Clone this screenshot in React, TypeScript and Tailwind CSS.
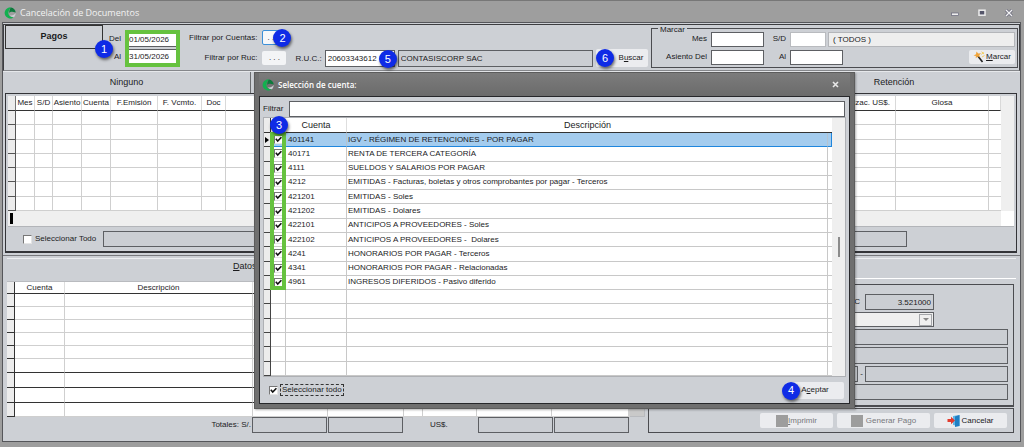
import React, { useState } from 'react'

const accounts = [
    { code: '401141', name: 'IGV - RÉGIMEN DE RETENCIONES - POR PAGAR' },
    { code: '40171', name: 'RENTA DE TERCERA CATEGORÍA' },
    { code: '4111', name: 'SUELDOS Y SALARIOS POR PAGAR' },
    { code: '4212', name: 'EMITIDAS - Facturas, boletas y otros comprobantes por pagar - Terceros' },
    { code: '421201', name: 'EMITIDAS - Soles' },
    { code: '421202', name: 'EMITIDAS - Dolares' },
    { code: '422101', name: 'ANTICIPOS A PROVEEDORES - Soles' },
    { code: '422102', name: 'ANTICIPOS A PROVEEDORES -  Dolares' },
    { code: '4241', name: 'HONORARIOS POR PAGAR - Terceros' },
    { code: '4341', name: 'HONORARIOS POR PAGAR - Relacionadas' },
    { code: '4961', name: 'INGRESOS DIFERIDOS - Pasivo diferido' },
]

const blankAccountRows = [0, 1, 2, 3, 4, 5]
const documentRows = [0, 1, 2, 3, 4, 5, 6]

const documentColumns = [
    { label: '', width: 'w-[8px]' },
    { label: 'Mes', width: 'w-[19px]' },
    { label: 'S/D', width: 'w-[18px]' },
    { label: 'Asiento', width: 'w-[29px]' },
    { label: 'Cuenta', width: 'w-[29px]' },
    { label: 'F.Emisión', width: 'w-[47px]' },
    { label: 'F. Vcmto.', width: 'w-[44px]' },
    { label: 'Doc', width: 'w-[24px]' },
    { label: '', width: '' },
    { label: 'Cotizac. US$.', width: 'w-[60px]' },
    { label: 'Glosa', width: 'w-[93px]' },
    { label: '', width: 'w-[12px]' },
]

const entryColumns = ['w-[8px]', 'w-[50px]', 'w-[188px]', 'w-[75px]', 'w-[76px]', 'w-[19px]', 'w-[54px]', 'w-[75px]', 'w-[77px]', '']

const entryRows = [
    { height: 'h-[13px]', heavy: false },
    { height: 'h-[13px]', heavy: false },
    { height: 'h-[13px]', heavy: false },
    { height: 'h-[13px]', heavy: false },
    { height: 'h-[13px]', heavy: false },
    { height: 'h-[14px]', heavy: true },
    { height: 'h-[15px]', heavy: true },
    { height: 'h-[15px]', heavy: true },
    { height: 'h-[14px]', heavy: false },
]

const fieldBox = 'border border-[#5d5f63] bg-[#cbced3] outline-none'
const whiteBox = 'border border-[#5d5f63] bg-white outline-none'
const flatButton = 'flex items-center justify-center rounded-[2px] bg-[#ebecef]'

const Logo = () => (
    <svg className="size-[12px] shrink-0" viewBox="0 0 12 12">
        <path d="M7 0.4A5.6 5.6 0 1 0 9.8 10.3C7 10.6 4.6 9 4.4 6.6C4.2 4 5.6 1.5 7 0.4Z" fill="#12b04f" />
        <path d="M7 0.4C9.6 0.7 11.6 2.9 11.7 5.5L8.3 4.8C7.3 4.5 6 5 5.4 5.9C5 3.6 5.8 1.5 7 0.4Z" fill="#0d7a3c" />
        <path d="M11.7 6C11.6 7.8 11 9.2 9.8 10.3C7.9 10.3 6.7 9.5 6 8.3C8.4 8.8 10.3 7.8 11.7 6Z" fill="#c9ced2" />
    </svg>
)

const Badge = ({ value, place }: { value: number; place: string }) => (
    <span className={`absolute z-10 flex size-[18px] items-center justify-center rounded-full bg-[#0f2be6] text-[11px] leading-none text-white shadow-[1px_2px_3px_rgba(0,0,0,0.55)] ${place}`}>
        {value}
    </span>
)

const Check = ({ label, checked, onChange }: { label: string; checked: boolean; onChange: () => void }) => (
    <span className="relative block size-[9px] shrink-0">
        <input
            type="checkbox"
            aria-label={label}
            checked={checked}
            onChange={onChange}
            className="block size-[9px] appearance-none border border-r-[#e4e4e4] border-b-[#e4e4e4] border-t-[#777] border-l-[#777] bg-white"
        />
        {checked && (
            <svg className="pointer-events-none absolute inset-0 size-[9px]" viewBox="0 0 9 9">
                <path d="M1.8 3.8L3.7 6L7.4 2.2" fill="none" stroke="#111" strokeWidth="1.6" />
            </svg>
        )}
    </span>
)

const FilterPanel = () => (
    <div className="flex h-[47px] border border-b-[#85878b] border-[#3c3d40] px-px">
        <div className="flex h-[24px] w-[98px] shrink-0 items-center justify-center border border-[#333] text-[9px] font-bold">Pagos</div>

        <div className="relative flex shrink-0 items-center gap-[4px] pt-px text-[8px]">
            <Badge value={1} place="left-[-8px] top-[15px]" />
            <div className="flex w-[18px] flex-col gap-[6px] text-right leading-[12px]">
                <label htmlFor="del">Del</label>
                <label htmlFor="al">Al</label>
            </div>
            <div className="flex flex-col gap-[2px] border-4 border-[#66c23f]">
                <input id="del" defaultValue="01/05/2026" className="h-[13px] w-[47px] border-b border-[#5d5f63] bg-white outline-none" />
                <input id="al" defaultValue="31/05/2026" className="h-[14px] w-[47px] border-t border-[#5d5f63] bg-white outline-none" />
            </div>
        </div>

        <div className="ml-[9px] flex shrink-0 flex-col justify-center gap-[6px] text-[8px]">
            <div className="relative flex items-center justify-end gap-[5px]">
                <span>Filtrar por Cuentas:</span>
                <button aria-label="Filtrar por Cuentas" className="flex h-[15px] w-[24px] items-center rounded-[2px] border border-[#3b8fd8] bg-[#f6f7f9] pl-[4px]">. . .</button>
                <Badge value={2} place="right-[-5px] top-[-1px]" />
            </div>
            <div className="flex items-center justify-end gap-[5px]">
                <span>Filtrar por Ruc:</span>
                <button aria-label="Filtrar por Ruc" className="flex h-[14px] w-[24px] items-center justify-center rounded-[2px] bg-[#f3f4f6]">. . .</button>
            </div>
        </div>

        <div className="ml-[9px] flex min-w-0 flex-1 items-end gap-[3px] pb-[3px] text-[8px]">
            <label htmlFor="ruc" className="leading-[16px]">R.U.C.:</label>
            <div className="relative shrink-0">
                <input id="ruc" defaultValue="20603343612" className={`block h-[17px] w-[70px] px-[2px] ${whiteBox}`} />
                <Badge value={5} place="right-[-2px] top-[0px]" />
            </div>
            <input aria-label="Razón social" readOnly value="CONTASISCORP SAC" className={`h-[17px] min-w-0 flex-1 px-[2px] ${fieldBox}`} />
            <button className={`relative h-[18px] w-[52px] shrink-0 pl-[18px] ${flatButton}`}>
                <Badge value={6} place="left-[0px] top-[0px]" />
                <span>B<u>u</u>scar</span>
            </button>
        </div>

        <fieldset className="relative mt-[3px] ml-[3px] flex h-[40px] w-[367px] shrink-0 flex-col justify-center gap-[3px] border border-[#4b4c50] pr-[2px] text-[8px]">
            <legend className="absolute top-[-4px] left-[6px] bg-[#cdd0d5] px-[2px] leading-[10px]">Marcar</legend>
            <div className="flex items-center">
                <label htmlFor="mes" className="w-[59px] pr-[4px] text-right">Mes</label>
                <input id="mes" className={`h-[15px] w-[53px] ${whiteBox}`} />
                <label htmlFor="sd" className="w-[26px] pr-[4px] text-right">S/D</label>
                <input id="sd" className="h-[15px] w-[36px] border border-[#b9bbbf] bg-white outline-none" />
                <input aria-label="Subdiario" readOnly value="( TODOS )" className="ml-[2px] h-[15px] min-w-0 flex-1 border border-[#b4b6ba] bg-[#eeeeee] px-[4px] outline-none" />
            </div>
            <div className="flex items-center">
                <label htmlFor="asiento" className="w-[59px] pr-[4px] text-right whitespace-nowrap">Asiento Del</label>
                <input id="asiento" className={`h-[15px] w-[53px] ${whiteBox}`} />
                <label htmlFor="asientoAl" className="w-[26px] pr-[4px] text-right">Al</label>
                <input id="asientoAl" className={`h-[15px] w-[53px] ${whiteBox}`} />
                <button className={`ml-auto h-[14px] w-[46px] gap-px ${flatButton}`}>
                    <svg className="size-[12px]" viewBox="0 0 12 12">
                        <path d="M4.5 4.5L9.5 11" stroke="#222" strokeWidth="1.6" />
                        <path d="M0.5 4.5L3 3.2L3.5 0.5L5.2 2.6L8 2.2L6.2 4.3L7.3 6.5L4.8 5.6L2.7 7.2L2.9 4.9Z" fill="#f0a43a" />
                        <path d="M8.5 0.8L11 3M9 6L11.5 4.5M8.5 3.5L10.5 1" stroke="#f3c94f" strokeWidth="0.9" />
                    </svg>
                    <span><u>M</u>arcar</span>
                </button>
            </div>
        </fieldset>
    </div>
)

const DocumentsPane = () => {
    const [allSelected, setAllSelected] = useState(false)

    return (
        <section>
            <div className="flex h-[22px] justify-between border-t border-[#e6e8eb] text-[9px]">
                <button className="w-[248px] border-r border-[#6b6d70]">Ninguno</button>
                <button className="w-[252px]">Retención</button>
            </div>
            <div className="mr-[3px] ml-[2px] border border-b-2 border-[#333438]">
                <div className="mt-[2px] mr-[2px] ml-[2px] border-b border-[#b3b5b9] bg-white">
                    <div className="flex">
                        <table className="h-[115px] min-w-0 flex-1 table-fixed border-separate border-spacing-0 text-[8px] leading-[10px]">
                            <thead>
                                <tr>
                                    {documentColumns.map((column, index) => (
                                        <th
                                            key={index}
                                            className={`h-[15px] overflow-hidden border-b border-b-[#333] p-0 font-normal whitespace-nowrap ${column.width} ${index === 0 ? 'border-r border-r-[#777] bg-[#ececec]' : 'border-r border-r-[#d9d9d9]'}`}
                                        >
                                            {column.label}
                                        </th>
                                    ))}
                                </tr>
                            </thead>
                            <tbody>
                                {documentRows.map((row) => (
                                    <tr key={row}>
                                        {documentColumns.map((_, index) => (
                                            <td
                                                key={index}
                                                className={`border-b p-0 ${index === 0 ? 'border-r border-[#555] bg-[#ececec]' : index === 11 ? 'border-[#cfcfcf]' : 'border-r border-[#cfcfcf]'}`}
                                            />
                                        ))}
                                    </tr>
                                ))}
                            </tbody>
                        </table>
                        <div className="w-[13px] bg-[#efefef]" />
                    </div>
                    <div className="mr-[13px] h-[15px] bg-[#efefef] py-[2px] pl-[2px]">
                        <div className="h-[11px] w-[3px] bg-black" />
                    </div>
                </div>
                <div className="flex h-[24px] items-center text-[8px]">
                    <label className="ml-[17px] flex items-center gap-[3px] whitespace-nowrap">
                        <Check label="Seleccionar Todo" checked={allSelected} onChange={() => setAllSelected(!allSelected)} />
                        Seleccionar Todo
                    </label>
                    <input aria-label="Documento" readOnly className={`mr-[109px] ml-[7px] h-[16px] min-w-0 flex-1 ${fieldBox}`} />
                </div>
            </div>
        </section>
    )
}

const EntriesTable = () => (
    <div className="min-w-0 flex-1">
        <div className="flex border-t border-r border-[#b9bbbf] bg-white">
            <table className="min-w-0 flex-1 table-fixed border-separate border-spacing-0 text-[8px] leading-[10px]">
                <thead>
                    <tr>
                        {entryColumns.map((width, index) => (
                            <th key={index} className={`h-[12px] border-r border-b border-b-[#333] p-0 font-normal ${width} ${index === 0 ? 'border-r-[#333] bg-[#ececec]' : 'border-r-[#dedede]'}`}>
                                {index === 1 ? 'Cuenta' : index === 2 ? 'Descripción' : ''}
                            </th>
                        ))}
                    </tr>
                </thead>
                <tbody>
                    {entryRows.map((entry, row) => (
                        <tr key={row}>
                            {entryColumns.map((_, index) => (
                                <td
                                    key={index}
                                    className={`p-0 ${entry.height} border-r border-b ${index === 0 ? 'border-[#333] bg-[#ececec]' : entry.heavy ? 'border-r-[#cfcfcf] border-b-[#333]' : 'border-[#cfcfcf]'}`}
                                />
                            ))}
                        </tr>
                    ))}
                </tbody>
            </table>
            <div className="w-[14px] border-b border-[#b9bbbf] bg-[#c9c9c9]" />
        </div>
        <div className="flex items-center text-[8px]">
            <span className="w-[245px] pr-[1px] text-right">Totales: S/.</span>
            <input aria-label="Total cargo S/." readOnly className={`h-[16px] w-[75px] ${fieldBox}`} />
            <input aria-label="Total abono S/." readOnly className={`ml-px h-[16px] w-[75px] ${fieldBox}`} />
            <span className="w-[75px] pl-[27px]">US$.</span>
            <input aria-label="Total cargo US$." readOnly className={`h-[16px] w-[75px] ${fieldBox}`} />
            <input aria-label="Total abono US$." readOnly className={`ml-px h-[16px] w-[75px] ${fieldBox}`} />
        </div>
    </div>
)

const PaymentPanel = () => (
    <div className="w-[366px] shrink-0 pt-[3px] text-[8px]">
        <div className="flex h-[123px] flex-col gap-[2px] border border-b-2 border-[#4b4c50] pt-[9px] pr-[5px] pl-[100px]">
            <div className="flex items-center justify-end gap-[5px] pr-[74px]">
                <label htmlFor="tc">TC</label>
                <input id="tc" readOnly value="3.521000" className={`h-[16px] w-[69px] px-[2px] text-right ${fieldBox}`} />
            </div>
            <div className="mr-[74px] flex h-[15px] shrink-0 items-center justify-end border border-[#5d5f63] bg-[#efefef] pr-px">
                <button aria-label="Abrir lista" className="flex h-[12px] w-[13px] items-center justify-center border border-[#a4a6aa]">
                    <svg className="h-[3px] w-[6px]" viewBox="0 0 6 3"><path d="M0 0H6L3 3Z" fill="#888" /></svg>
                </button>
            </div>
            <input aria-label="Banco" readOnly className={`h-[16px] w-full ${fieldBox}`} />
            <input aria-label="Cuenta bancaria" readOnly className={`h-[17px] w-full ${fieldBox}`} />
            <div className="flex items-center">
                <input aria-label="Serie" readOnly className={`h-[16px] min-w-0 flex-1 ${fieldBox}`} />
                <span className="w-[7px] text-center">-</span>
                <input aria-label="Número" readOnly className={`h-[16px] w-[143px] ${fieldBox}`} />
            </div>
            <input aria-label="Glosa" readOnly className={`h-[16px] w-full ${fieldBox}`} />
        </div>
        <div className="mt-px flex h-[25px] items-center justify-end gap-[4px] border border-[#4b4c50] pr-[6px]">
            <button disabled className={`h-[15px] w-[73px] text-[#77787c] ${flatButton}`}>
                <i className="size-[12px] bg-[#9d9d9d]" />
                <span><u>I</u>mprimir</span>
            </button>
            <button disabled className={`h-[15px] w-[93px] gap-[3px] text-[#77787c] ${flatButton}`}>
                <i className="size-[12px] bg-[#9d9d9d]" />
                <span>Generar Pago</span>
            </button>
            <button className={`h-[15px] w-[73px] gap-px ${flatButton}`}>
                <svg className="size-[13px]" viewBox="0 0 13 13">
                    <path d="M6 2L12.5 1V12L6 11Z" fill="#5fb4e6" />
                    <path d="M8 2.5L12.5 1V12L8 13Z" fill="#1f7fc4" />
                    <path d="M0.5 5H4V2.8L8 6.5L4 10.2V8H0.5Z" fill="#e23b2e" />
                </svg>
                <span>Cancelar</span>
            </button>
        </div>
    </div>
)

const AccountDialog = () => {
    const [selectedCodes, setSelectedCodes] = useState<string[]>(accounts.map(a => a.code))

    const toggleCode = (code: string) => {
        setSelectedCodes(prev => prev.includes(code) ? prev.filter(c => c !== code) : [...prev, code])
    }

    const toggleAll = () => {
        setSelectedCodes(selectedCodes.length === accounts.length ? [] : accounts.map(a => a.code))
    }

    return (
        <div role="dialog" aria-label="Selección de cuenta" className="absolute top-[71px] right-[169px] left-[254px] z-20 border border-[#5c5c5c] bg-[#6f6f6f] px-[4px] pb-[4px] shadow-[1px_1px_2px_rgba(0,0,0,0.3)]">
            <div className="flex h-[23px] items-center gap-[4px] bg-linear-to-b from-[#7c7c7c] to-[#6b6b6b] pl-[3px]">
                <Logo />
                <h2 className="flex-1 font-['Open_Sans',sans-serif] text-[8px] font-semibold text-white">Selección de cuenta:</h2>
                <button aria-label="Cerrar" className="mr-[11px]">
                    <svg className="size-[7px]" viewBox="0 0 7 7"><path d="M1 1L6 6M6 1L1 6" stroke="#e8e8e8" strokeWidth="1.6" /></svg>
                </button>
            </div>

            <div className="border border-[#26272a] bg-[#cdd0d5] pt-[4px] pr-[3px] pl-[3px]">
                <div className="flex items-center gap-[4px] pr-px text-[8px]">
                    <label htmlFor="filtrar" className="w-[22px]">Filtrar</label>
                    <input id="filtrar" className={`h-[16px] min-w-0 flex-1 px-[2px] ${whiteBox}`} />
                </div>

                <div className="relative flex border border-[#aeb0b4] bg-white">
                    <Badge value={3} place="left-[6px] top-[-2px]" />
                    <div className="pointer-events-none absolute top-[14px] left-[6px] z-5 h-[158px] w-[16px] border-4 border-[#66c23f]" />
                    <table className="h-[258px] min-w-0 flex-1 table-fixed border-separate border-spacing-0 text-[8px] leading-[10px]">
                        <thead>
                            <tr className="text-[9px]">
                                <th className="h-[15px] w-[7px] border-r border-b border-[#333] bg-[#ececec] p-0" />
                                <th className="w-[15px] border-b border-[#333] p-0" />
                                <th className="w-[61px] border-r border-b border-r-[#dedede] border-b-[#333] p-0 font-normal">Cuenta</th>
                                <th className="border-b border-[#333] p-0 font-normal">Descripción</th>
                                <th className="w-[4px] border-b border-[#333] p-0" />
                            </tr>
                        </thead>
                        <tbody>
                            {accounts.map((account, index) => (
                                <tr key={account.code} className={index === 0 ? 'bg-[#a4ccee]' : ''}>
                                    <td className="h-[14px] border-r border-b border-[#444] bg-[#ececec] p-0">
                                        {index === 0 && <svg className="h-[6px] w-[5px]" viewBox="0 0 5 6"><path d="M1 0L5 3L1 6Z" fill="#000" /></svg>}
                                    </td>
                                    <td className={`border-r border-b p-0 ${index === 0 ? 'border-b-[#1f86dd] border-r-[#b4c4d2]' : 'border-[#c8c8c8]'}`}>
                                        <div className="flex justify-center">
                                            <Check label={account.code} checked={selectedCodes.includes(account.code)} onChange={() => toggleCode(account.code)} />
                                        </div>
                                    </td>
                                    <td className={`border-r border-b p-0 pl-[2px] ${index === 0 ? 'border-b-[#1f86dd] border-r-[#b4c4d2]' : 'border-[#c8c8c8]'}`}>{account.code}</td>
                                    <td className={`border-r border-b p-0 pl-px whitespace-pre ${index === 0 ? 'border-b-[#1f86dd] border-r-[#b4c4d2]' : 'border-[#c8c8c8]'}`}>{account.name}</td>
                                    <td className={`border-b p-0 ${index === 0 ? 'border-r border-[#1f86dd]' : 'border-[#c8c8c8]'}`} />
                                </tr>
                            ))}
                            {blankAccountRows.map((row) => (
                                <tr key={row}>
                                    <td className="h-[14px] border-r border-b border-[#444] bg-[#ececec] p-0" />
                                    <td className="border-r border-b border-[#c8c8c8] p-0" />
                                    <td className="border-r border-b border-[#c8c8c8] p-0" />
                                    <td className="border-r border-b border-[#c8c8c8] p-0" />
                                    <td className="border-b border-[#c8c8c8] p-0" />
                                </tr>
                            ))}
                        </tbody>
                    </table>
                    <div className="flex w-[13px] justify-center bg-[#efefef] pt-[119px]">
                        <div className="h-[20px] w-[2px] bg-[#8c8c8c]" />
                    </div>
                </div>

                <div className="flex h-[26px] items-center justify-between text-[8px]">
                    <label className="ml-[6px] flex items-center gap-[2px]">
                        <Check label="Seleccionar todo" checked={selectedCodes.length === accounts.length} onChange={toggleAll} />
                        <span className="border border-dashed border-[#333] px-px leading-[10px]">Seleccionar todo</span>
                    </label>
                    <button className={`relative mr-[2px] h-[17px] w-[58px] ${flatButton}`}>
                        <Badge value={4} place="left-[-4px] top-0" />
                        <span>A<u>c</u>eptar</span>
                    </button>
                </div>
            </div>
        </div>
    )
}

const App = () => {
    return (
        <div className="relative flex min-h-screen flex-col overflow-hidden border-t border-[#777] bg-[#9e9e9e] font-['Liberation_Sans',Arial,sans-serif] text-[#1b1b1d]">
            <header className="flex h-[21px] items-center gap-[4px] pt-[3px] pl-[4px]">
                <Logo />
                <h1 className="flex-1 font-['Open_Sans',sans-serif] text-[9px] text-[#f2f2f2]">Cancelación de Documentos</h1>
                <div className="mr-[11px] flex items-center gap-[19px]">
                    <button aria-label="Minimizar">
                        <svg className="size-[8px]" viewBox="0 0 8 8"><rect x="0.5" y="4" width="7" height="2.5" fill="#eee" stroke="#66667a" strokeWidth="0.7" /></svg>
                    </button>
                    <button aria-label="Maximizar">
                        <svg className="size-[8px]" viewBox="0 0 8 8"><rect x="1" y="1.2" width="6" height="5" fill="#55566a" stroke="#eee" strokeWidth="1.5" /></svg>
                    </button>
                    <button aria-label="Cerrar ventana">
                        <svg className="size-[8px]" viewBox="0 0 8 8">
                            <path d="M1 1L7 7M7 1L1 7" stroke="#66667a" strokeWidth="2.8" />
                            <path d="M1 1L7 7M7 1L1 7" stroke="#f2f2f2" strokeWidth="1.4" />
                        </svg>
                    </button>
                </div>
            </header>

            <main className="mr-[3px] mb-[5px] ml-[2px] flex flex-1 flex-col border border-[#55565a] bg-[#cdd0d5] pt-px">
                <FilterPanel />
                <DocumentsPane />
                <section className="mt-[2px] flex-1 border-t border-[#77787c] px-[4px] pt-[2px]">
                    <div className="flex h-[23px] border-t border-[#eceef0] text-[9px]">
                        <span className="flex-1 pt-px pl-[226px]"><u>D</u>atos</span>
                        <div className="h-[20px] w-[366px] border-b border-white" />
                    </div>
                    <div className="flex gap-[3px] pr-[2px]">
                        <EntriesTable />
                        <PaymentPanel />
                    </div>
                </section>
            </main>

            <AccountDialog />
        </div>
    )
}

export default App
